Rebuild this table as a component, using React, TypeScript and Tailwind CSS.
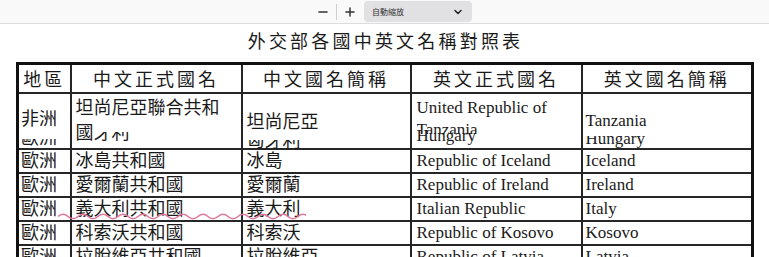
import { ChevronDown, Minus, Plus } from "lucide-react";

const CJK = "font-['Liberation_Serif','Noto_Sans_CJK_TC',serif]";

interface Row {
	region: string;
	formal: string;
	short: string;
	enFormal: string;
	enShort: string;
}

const ROWS: Row[] = [
	{ region: "歐洲", formal: "冰島共和國", short: "冰島", enFormal: "Republic of Iceland", enShort: "Iceland" },
	{ region: "歐洲", formal: "愛爾蘭共和國", short: "愛爾蘭", enFormal: "Republic of Ireland", enShort: "Ireland" },
	{ region: "歐洲", formal: "義大利共和國", short: "義大利", enFormal: "Italian Republic", enShort: "Italy" },
	{ region: "歐洲", formal: "科索沃共和國", short: "科索沃", enFormal: "Republic of Kosovo", enShort: "Kosovo" },
	{ region: "歐洲", formal: "拉脫維亞共和國", short: "拉脫維亞", enFormal: "Republic of Latvia", enShort: "Latvia" },
];

// bottom slice of a line that got clipped by the pdf renderer
const Clip = ({ text, h }: { text: string; h: string }) => (
	<span className={`inline-flex ${h} items-end overflow-hidden align-bottom`}>
		<span className="leading-[20px] whitespace-nowrap">{text}</span>
	</span>
);

const cell = "border-2 border-[#262626] p-0 align-middle";

export default function App() {
	return (
		<div className={`w-[769px] h-[257px] overflow-hidden bg-white text-[#1a1a1a] ${CJK}`}>
			<div className="h-6 bg-[#f9f9fa] border-b border-[#dcdcde] flex items-center">
				<div className="ml-[316px] flex items-center">
					<Minus className="w-3.5 h-3.5 text-[#333]" strokeWidth={2.5} />
					<span className="mx-1.5 h-4 w-px bg-[#cfcfd1]" />
					<Plus className="w-3.5 h-3.5 text-[#333]" strokeWidth={2.5} />
				</div>
				<div className="ml-[7px] h-[21px] w-[108px] bg-[#e1e1e3] rounded-sm flex items-center justify-between px-2">
					<span className="text-[8px] font-['Noto_Sans_CJK_TC',sans-serif] text-[#333]">自動縮放</span>
					<ChevronDown className="w-3 h-3 text-[#222]" strokeWidth={3} />
				</div>
			</div>

			<div className="h-[31px] flex items-center justify-center pl-[2px]">
				<h1 className="text-[18px] tracking-[3.2px] font-['Noto_Sans_CJK_TC',serif] font-normal leading-none">
					外交部各國中英文名稱對照表
				</h1>
			</div>

			<div className="relative ml-[16px] mt-[7px] w-[735px]">
				<table className="table-fixed border-collapse w-full border-[3px] border-[#111]">
					<colgroup>
						<col className="w-[53px]" />
						<col className="w-[171px]" />
						<col className="w-[169px]" />
						<col className="w-[171px]" />
						<col className="w-[171px]" />
					</colgroup>
					<thead>
						<tr className="h-[28px] text-[18px] tracking-[3px] font-['Noto_Sans_CJK_TC',serif]">
							<th className={`${cell} font-normal text-center`}>地區</th>
							<th className={`${cell} font-normal text-center`}>中文正式國名</th>
							<th className={`${cell} font-normal text-center`}>中文國名簡稱</th>
							<th className={`${cell} font-normal text-center`}>英文正式國名</th>
							<th className={`${cell} font-normal text-center`}>英文國名簡稱</th>
						</tr>
					</thead>
					<tbody className="text-[18px]">
						<tr className="h-[56px]">
							<td className={`${cell} align-top`}>
								<div className="h-[54px] flex flex-col pl-[2px]">
									<span className="mt-[14px] leading-[22px]">非洲</span>
									<span className="mt-auto mb-[3px] leading-none">
										<Clip text="歐洲" h="h-[9px]" />
									</span>
								</div>
							</td>
							<td className={`${cell} align-top`}>
								<div className="h-[54px] flex flex-col pl-[4px] leading-[23px]">
									<span className="mt-[3px]">坦尚尼亞聯合共和</span>
									<span className="flex items-end">
										國<span className="mb-[2px]"><Clip text="牙利" h="h-[11px]" /></span>
									</span>
								</div>
							</td>
							<td className={`${cell} align-top`}>
								<div className="h-[54px] flex flex-col pl-[4px]">
									<span className="mt-[17px] leading-[22px]">坦尚尼亞</span>
									<span className="mt-auto mb-[4px] leading-none">
										<Clip text="匈牙利" h="h-[11px]" />
									</span>
								</div>
							</td>
							<td className={`${cell} align-top font-['Liberation_Serif',serif] text-[17px]`}>
								<div className="h-[54px] flex flex-col pl-[5px]">
									<span className="mt-[3px] leading-[22px]">United Republic of</span>
									<span className="relative mt-[7px] leading-[20px]">
										Hungary
										<span className="absolute left-0 top-[-6px] h-[14px] overflow-hidden leading-[20px]">Tanzania</span>
									</span>
								</div>
							</td>
							<td className={`${cell} align-top font-['Liberation_Serif',serif] text-[17px]`}>
								<div className="h-[54px] flex flex-col pl-[3px]">
									<span className="mt-[16px] leading-[22px]">Tanzania</span>
									<span className="mt-auto mb-[2px] leading-none">
										<Clip text="Hungary" h="h-[13px]" />
									</span>
								</div>
							</td>
						</tr>
						{ROWS.map((r) => (
							<tr key={r.enShort} className="h-[24px] leading-[22px]">
								<td className={`${cell} pl-[2px]`}>{r.region}</td>
								<td className={`${cell} pl-[4px]`}>{r.formal}</td>
								<td className={`${cell} pl-[4px]`}>{r.short}</td>
								<td className={`${cell} pl-[5px] font-['Liberation_Serif',serif] text-[17px]`}>{r.enFormal}</td>
								<td className={`${cell} pl-[3px] font-['Liberation_Serif',serif] text-[17px]`}>{r.enShort}</td>
							</tr>
						))}
					</tbody>
				</table>

				{/* spell-check squiggle */}
				<svg className="absolute left-[42px] top-[150px]" width="248" height="9" viewBox="0 0 248 9">
					<path
						d="M0 4.5 Q5 0 10 4.5 T20 4.5 T30 4.5 T40 4.5 T50 4.5 T60 4.5 T70 4.5 T80 4.5 T90 4.5 T100 4.5 T110 4.5 T120 4.5 T130 4.5 T140 4.5 T150 4.5 T160 4.5 T170 4.5 T180 4.5 T190 4.5 T200 4.5 T210 4.5 T220 4.5 T230 4.5 T240 4.5 T250 4.5"
						fill="none"
						stroke="#e2789a"
						strokeWidth="1.6"
					/>
				</svg>
			</div>
		</div>
	);
}
